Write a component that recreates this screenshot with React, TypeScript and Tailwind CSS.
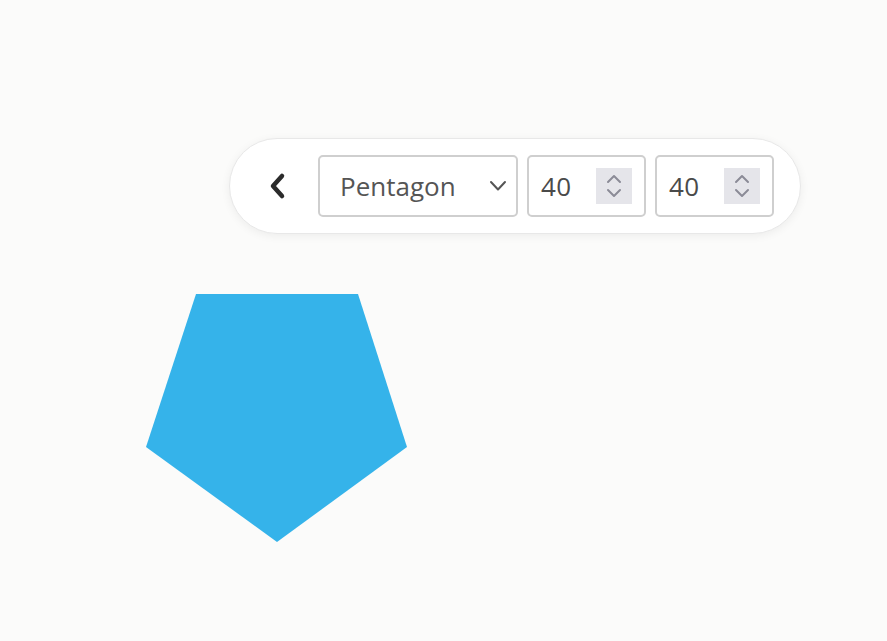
function ChevronLeft() {
  return (
    <svg width="20" height="28" viewBox="0 0 20 28" fill="none">
      <path d="M15 4 L6 14 L15 24" stroke="#2b2b2b" strokeWidth="4.5" strokeLinecap="round" strokeLinejoin="round" />
    </svg>
  );
}

function ChevronDown() {
  return (
    <svg width="18" height="12" viewBox="0 0 18 12" fill="none">
      <path d="M2 2 L9 9.5 L16 2" stroke="#555" strokeWidth="2" strokeLinecap="round" strokeLinejoin="round" />
    </svg>
  );
}

function Spinner() {
  return (
    <div className="flex h-9 w-9 items-center justify-center bg-[#e5e5ea]">
      <svg width="16" height="28" viewBox="0 0 16 28" fill="none">
        <path d="M2 10 L8 4 L14 10" stroke="#8b8b97" strokeWidth="2" strokeLinecap="round" strokeLinejoin="round" />
        <path d="M2 18 L8 24 L14 18" stroke="#8b8b97" strokeWidth="2" strokeLinecap="round" strokeLinejoin="round" />
      </svg>
    </div>
  );
}

function NumberBox({ value }: { value: number }) {
  return (
    <div className="flex h-[62px] w-[119px] items-center justify-between rounded-[5px] border-2 border-[#cfcfcf] bg-white pl-3 pr-3">
      <span className="text-[26px] tracking-[0.5px] text-[#4a4a4a]">{value}</span>
      <Spinner />
    </div>
  );
}

export default function App() {
  return (
    <div
      className="relative h-[641px] w-full overflow-hidden bg-[#fbfbfa]"
      style={{ fontFamily: '"Open Sans", "Liberation Sans", sans-serif' }}
    >
      {/* floating toolbar */}
      <div className="absolute left-[229px] top-[138px] flex h-[96px] w-[572px] items-center rounded-full border border-[#e8e8e8] bg-white pl-[37px] pr-[26px] shadow-[0_2px_10px_rgba(0,0,0,0.06)]">
        <button className="mr-[31px] flex items-center">
          <ChevronLeft />
        </button>
        <div className="flex h-[62px] w-[201px] items-center justify-between rounded-[5px] border-2 border-[#cfcfcf] bg-white pl-5 pr-[9px]">
          <span className="text-[26px] text-[#555]">Pentagon</span>
          <ChevronDown />
        </div>
        <div className="ml-[9px] flex gap-[9px]">
          <NumberBox value={40} />
          <NumberBox value={40} />
        </div>
      </div>

      {/* canvas shape */}
      <svg className="absolute left-0 top-0" width="887" height="641">
        <polygon points="196,294 358,294 407,447 277,542 146,447" fill="#35b3ea" />
      </svg>
    </div>
  );
}
